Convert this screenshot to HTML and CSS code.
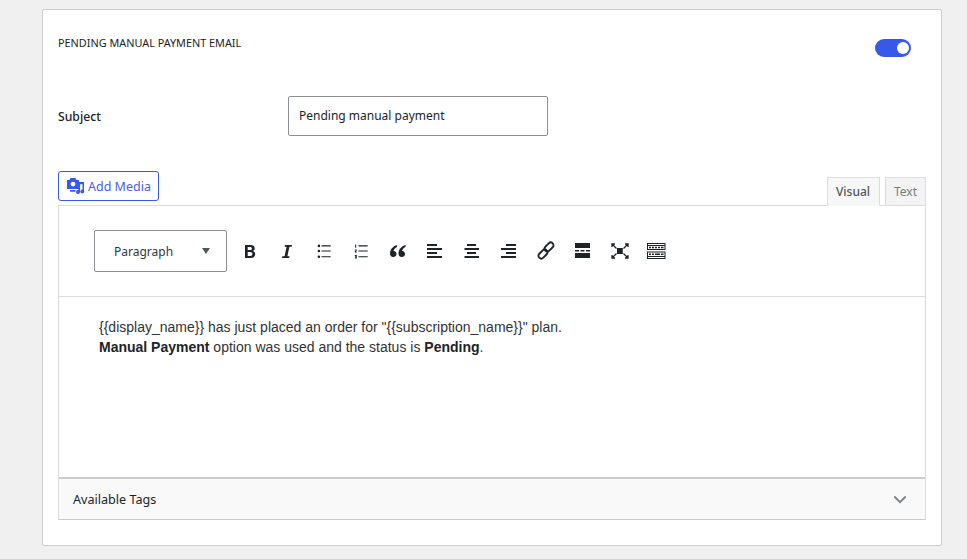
FILE: index.html
```html
<!DOCTYPE html>
<html lang="en">
<head>
<meta charset="utf-8">
<title>Pending manual payment email</title>
<link rel="stylesheet" href="styles.css">
</head>
<body>
<section class="card">
  <header class="card-head">
    <h2 class="card-title">Pending Manual Payment Email</h2>
    <span class="toggle"><span class="knob"></span></span>
  </header>
  <div class="field">
    <label class="field-label">Subject</label>
    <div class="input">Pending manual payment</div>
  </div>
  <div class="editor-top">
    <button class="media-btn">
      <svg class="media-icon" viewBox="0 0 18 16" width="18" height="16"><path fill="#3858e9" fill-rule="evenodd" d="M3.500 0h5l1 2H12v9H0V2h2.500zM6 3.700a2.400 2.400 0 1 0 0 4.800 2.400 2.400 0 0 0 0-4.800z"/><path fill="#3858e9" d="M3 12h5.500v1.700H3zM11.500 6h1.600v8h-1.600zM11.500 4H17v2.200h-5.500zM15.500 5H17v8.500h-1.500z"/><circle cx="11" cy="14" r="2" fill="#3858e9"/><circle cx="15.300" cy="13.500" r="1.900" fill="#3858e9"/></svg>
      <span>Add Media</span>
    </button>
    <div class="tabs">
      <span class="tab tab-active">Visual</span>
      <span class="tab">Text</span>
    </div>
  </div>
  <div class="editor">
    <div class="toolbar">
      <div class="select"><span>Paragraph</span><i class="caret"></i></div>
      <div class="tools">
        <svg class="tool" viewBox="0 0 20 20"><path fill="#1d2327" d="M5 4h5.500c2.600 0 4.200 1.100 4.200 3.200 0 1.400-.7 2.300-1.900 2.800 1.500.4 2.400 1.500 2.400 3.200 0 2.400-1.800 3.800-4.500 3.800H5zM7.700 6.100v3h2.300c1.200 0 1.900-.5 1.900-1.500S11.200 6.100 10 6.100zm0 5v3.800h2.500c1.400 0 2.200-.7 2.200-1.900s-.8-1.900-2.200-1.900z"/></svg>
        <svg class="tool" viewBox="0 0 20 20"><path fill="#1d2327" d="M8 4h7l-.4 1.800h-2.200L10.400 15.200h2.200L12.200 17H5l.4-1.800h2.200L9.600 5.800H7.600z"/></svg>
        <svg class="tool" viewBox="0 0 20 20"><g fill="#1d2327"><circle cx="4.900" cy="4.900" r="1.300"/><circle cx="4.900" cy="10" r="1.300"/><circle cx="4.900" cy="15.700" r="1.300"/><path d="M7.500 4.300h9.200v1.100H7.500zM7.500 9.500h9.200v1.100H7.500zM7.500 15.200h9.200v1.100H7.500z"/></g></svg>
        <svg class="tool" viewBox="0 0 20 20"><g fill="#1d2327"><path d="M7.500 4.300h9.200v1.100H7.500zM7.500 9.500h9.200v1.100H7.500zM7.500 15.200h9.200v1.100H7.500z"/><path d="M4.200 3.500h1v3.200h-1zM3.800 8.500h2v1l-1 1h1v1h-2v-1l1-1h-1zM3.800 14h2v3.500h-2v-1h1v-.3h-.7v-.9h.7V15h-1z"/></g></svg>
        <svg class="tool" viewBox="0 0 20 20"><path fill="#1d2327" d="M9 4C5.500 5 2 8 2 12.500 2 14.700 3.300 16 5.200 16c1.900 0 3.300-1.300 3.300-3 0-1.800-1.200-3-2.900-3 .2-1.500 1.500-3 3.400-4zM17.500 4C14 5 10.500 8 10.500 12.500c0 2.200 1.300 3.500 3.200 3.500 1.900 0 3.300-1.300 3.300-3 0-1.800-1.200-3-2.900-3 .2-1.500 1.500-3 3.400-4z"/></svg>
        <svg class="tool" viewBox="0 0 20 20"><path fill="#1d2327" d="M2 3h10v2H2zM2 7h15v2H2zM2 11h10v2H2zM2 15h15v2H2z"/></svg>
        <svg class="tool" viewBox="0 0 20 20"><path fill="#1d2327" d="M5 3h9v2H5zM2.500 7h14.500v2H2.500zM5 11h9v2H5zM2.500 15h14.500v2H2.500z"/></svg>
        <svg class="tool" viewBox="0 0 20 20"><path fill="#1d2327" d="M7 3h10v2H7zM2 7h15v2H2zM7 11h10v2H7zM2 15h15v2H2z"/></svg>
        <svg class="tool" viewBox="0 0 20 20"><g fill="none" stroke="#1d2327" stroke-width="1.900"><rect x="-5.200" y="-2.800" width="10.400" height="5.600" rx="2.800" transform="translate(13 6) rotate(-45)"/><rect x="-5.200" y="-2.800" width="10.400" height="5.600" rx="2.800" transform="translate(7 13) rotate(-45)"/></g></svg>
        <svg class="tool" viewBox="0 0 20 20"><path fill="#1d2327" d="M2 2h15v5H2zM2 12h15v5H2zM2 9h4v1.500H2zM7.500 9h4v1.500h-4zM13 9h4v1.500h-4z"/></svg>
        <svg class="tool" viewBox="0 0 20 20"><path fill="#1d2327" d="M7 7h5.800v6H7z"/><path fill="none" stroke="#1d2327" stroke-width="1.300" d="M2 6V3h3M2.500 3.500l4 4M18 6V3h-3M17.500 3.500l-4 4M2 14v3h3M2.500 16.500l4-4M18 14v3h-3M17.500 16.500l-4-4"/></svg>
        <svg class="tool" viewBox="0 0 20 20"><g fill="#1d2327"><path fill-rule="evenodd" d="M0 2h18.500v7H0zM1 3v1h16.500V3zm0 2v3h16.500V5z"/><path fill-rule="evenodd" d="M0 10.500h18.500V18H0zM1 11.500v3.500h16.500v-3.500zM1 16v1h16.500v-1z"/><path d="M2 5.800h2v1.500H2zM5 5.800h2v1.500H5zM8 5.800h2v1.500H8zM11 5.800h2v1.500h-2zM14 5.800h2.500v1.500H14zM2 12.500h2V14H2zM5 12.500h2V14H5zM8 12.500h5V14H8zM14 12.500h2.500V14H14z"/></g></svg>
      </div>
    </div>
    <div class="content">
      <p>{{display_name}} has just placed an order for "{{subscription_name}}" plan.<br><strong>Manual Payment</strong> option was used and the status is <strong>Pending</strong>.</p>
    </div>
    <div class="tags">
      <span>Available Tags</span>
      <svg class="chevron" viewBox="0 0 16 10" width="14" height="9"><path d="M1.500 1.500 8 8l6.500-6.500" fill="none" stroke="#82878c" stroke-width="2.400"/></svg>
    </div>
  </div>
</section>
</body>
</html>
```
FILE: styles.css
```css
* { box-sizing: border-box; }
html, body { margin: 0; height: 559px; overflow: hidden; }
body {
  background: #f0f0f1;
  font-family: "Noto Sans", sans-serif;
  color: #1d2327;
  padding: 9px 25px 0 42px;
}
.card {
  width: 900px;
  height: 537px;
  background: #fff;
  border: 1px solid #ccc;
  border-radius: 2px;
  padding: 0 15px;
}
.card-head {
  display: flex;
  justify-content: space-between;
  align-items: flex-start;
  height: 86px;
  padding-top: 26px;
}
.card-title {
  margin: 0;
  font-size: 10.85px;
  line-height: 14px;
  font-weight: 400;
  text-transform: uppercase;
}
.toggle {
  display: flex;
  justify-content: flex-end;
  align-items: center;
  width: 36px;
  height: 18px;
  margin: 3px 15px 0 0;
  padding-right: 2px;
  background: #3858e9;
  border-radius: 9px;
}
.knob {
  width: 12px;
  height: 12px;
  background: #fff;
  border-radius: 50%;
}
.field {
  display: flex;
  align-items: center;
  height: 40px;
}
.field-label {
  width: 230px;
  font-size: 12.2px;
  font-weight: 500;
}
.input {
  width: 260px;
  height: 40px;
  padding: 0 10px;
  border: 1px solid #8c8f94;
  border-radius: 2px;
  font-size: 12px;
  line-height: 38px;
}
.editor-top {
  display: flex;
  justify-content: space-between;
  align-items: flex-end;
  height: 69px;
}
.media-btn {
  display: flex;
  align-items: center;
  gap: 3px;
  width: 101px;
  height: 30px;
  margin-bottom: 4px;
  padding: 0 0 0 8px;
  background: #fff;
  border: 1px solid #3858e9;
  border-radius: 3px;
  color: #4b5ce8;
  font-family: inherit;
  font-size: 12.5px;
}
.tabs {
  display: flex;
  gap: 5px;
  margin-bottom: -1px;
}
.tab {
  height: 29px;
  padding: 0 8px;
  background: #f3f3f3;
  border: 1px solid #dcdcde;
  font-size: 12px;
  line-height: 27px;
  color: #787c82;
}
.tab-active {
  position: relative;
  z-index: 1;
  width: 53px;
  background: #f6f7f7;
  border-bottom-color: #f6f7f7;
  color: #50575e;
  font-weight: 500;
}
.editor {
  display: flex;
  flex-direction: column;
  width: 868px;
  height: 315px;
  border: 1px solid #dcdcde;
  border-bottom-color: #ccc;
}
.toolbar {
  display: flex;
  align-items: center;
  height: 91px;
  padding-left: 35px;
  border-bottom: 1px solid #dcdcde;
}
.select {
  display: flex;
  justify-content: space-between;
  align-items: center;
  width: 133px;
  height: 42px;
  padding: 0 16px 0 19px;
  border: 1px solid #8c8f94;
  border-radius: 2px;
  font-size: 12px;
  color: #32373c;
}
.caret {
  width: 0;
  height: 0;
  border-left: 4px solid transparent;
  border-right: 4px solid transparent;
  border-top: 6px solid #50575e;
}
.tools {
  display: flex;
  gap: 17px;
  margin-left: 13px;
}
.tool {
  width: 20px;
  height: 20px;
}
.content {
  flex: 1;
  padding: 20px 40px;
  font-family: "Liberation Sans", Arial, sans-serif;
  font-size: 14px;
  line-height: 20px;
  color: #333;
}
.content p { margin: 0; }
.content strong { color: #1d2327; }
.tags {
  display: flex;
  justify-content: space-between;
  align-items: center;
  height: 42px;
  padding: 0 18px 0 14px;
  background: #f9f9f9;
  border-top: 2px solid #ccc;
  font-size: 12.6px;
}
```
